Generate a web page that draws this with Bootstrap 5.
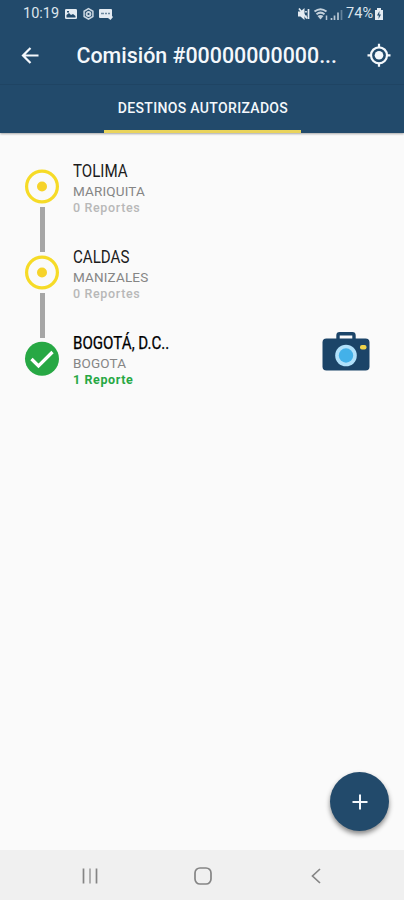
<!DOCTYPE html>
<html lang="es">
<head>
<meta charset="utf-8">
<meta name="viewport" content="width=device-width, initial-scale=1">
<title>Comisión</title>
<link href="https://cdn.jsdelivr.net/npm/bootstrap@5.3.0/dist/css/bootstrap.min.css" rel="stylesheet">
<style>
body{font-family:Roboto,"Noto Sans",sans-serif;background:#fafafa;height:900px;overflow:hidden;line-height:1}
svg{display:block;flex:none}
.top-area{background:#224a6b;height:133px;color:#f4f8fc;box-shadow:0 1px 2px #0005}
.status-line{height:27px;padding:1px 20px 0 23px;font-size:14.5px;color:#dce5ed}
.title-line{height:57px;padding:0 12px 0 20px}
.title-text{font-size:21.4px;font-weight:500;margin-left:34.5px;width:264px;line-height:30px;padding-top:1px;white-space:nowrap}
.tab-line{height:49px;border-top:1px solid #1f4463}
.tab-item{width:197px;height:48px;padding:1px 0 0 2px;border-bottom:3px solid #ead45c;font-size:14px;font-weight:500;letter-spacing:.33px}
.trip-list{padding:22px 34px 0 24px}
.trip-row{height:86px}
.rail{width:36px;padding-top:13px}
.rail-bar{width:5px;height:45px;background:#a6a6a6;margin-top:3px;flex:none}
.trip-text{margin-left:13px;padding-top:7px;white-space:nowrap}
.trip-name{font-size:18px;line-height:18px;color:#1c1c1c;transform:scaleX(.84);transform-origin:left}
.trip-name.done{color:#000;-webkit-text-stroke:.25px #000}
.trip-city{font-size:13.5px;line-height:16px;margin-top:3px;color:#858585;letter-spacing:.15px}
.trip-count{font-size:12.5px;line-height:16px;margin-top:1px;font-weight:500;color:#b8b8b8;letter-spacing:.65px}
.trip-count.done{color:#27a844;font-weight:700;letter-spacing:.6px}
.camera{margin-top:5px}
.fab{width:59px;height:59px;background:#224a6b;margin:0 15px 19px auto;box-shadow:0 3px 5px #0007}
.nav-keys{height:50px;background:#f0f0f0;padding:1px 82px 0 82px}
.key-home{margin-right:2px}
</style>
<script src="https://cdn.jsdelivr.net/npm/bootstrap@5.3.0/dist/js/bootstrap.bundle.min.js"></script>
</head>
<body class="d-flex flex-column">
<header class="top-area flex-shrink-0">
  <div class="status-line d-flex align-items-center">
    <span>10:19</span>
    <svg width="50" height="14" viewBox="0 0 50 14" style="margin-left:6px">
      <rect x="0" y="2" width="12" height="10" rx="1.3" fill="#e4ebf2"/><path d="M1.5 10.5V8l2.5-2 2 2 2-1 2.5 2v1.5zM2 4h2v1.5H2z" fill="#224a6b"/>
      <g fill="none" stroke="#cbd7e2"><path d="M23.500 1.700l4.400 2.600v5.200l-4.400 2.600-4.400-2.600V4.300z" stroke-width="1.500"/><circle cx="23.500" cy="7" r="2" stroke-width="1.800"/></g>
      <path d="M35 2h11a1 1 0 0 1 1 1v6l1 1-2.500 3L43 11h-8a1 1 0 0 1-1-1V3a1 1 0 0 1 1-1z" fill="#e4ebf2"/><path d="M36 6.500h3m1 0h2m1 0h2" stroke="#6d899f" stroke-width="1.500"/>
    </svg>
    <svg class="ms-auto" width="47" height="14" viewBox="0 0 47 14">
      <path d="M0 4.500h2.500L6.500 1v12L2.500 9.500H0z" fill="#e4ebf2"/><path d="M1 1.500l8 10M10.500 2v10M8 4v1.500M8 8.500V10" stroke="#e4ebf2" stroke-width="1.700"/>
      <g fill="none" stroke="#c4d1dc" stroke-width="2"><path d="M16.500 4.500q6-4.600 12 0M18.500 7.200q4-3.200 8 0"/></g><path d="M22.500 12.500l-3-3.500q3-2 6 0z" fill="#c4d1dc"/><path d="M28.500 8.500V13" stroke="#b7c7d4" stroke-width="1.500"/>
      <path d="M33.500 11v2M36.500 8.500V13M40 5.500V13" stroke="#b7c7d4" stroke-width="1.700"/><path d="M43.500 3v10" stroke="#64829b" stroke-width="1.700"/>
    </svg>
    <span style="margin-left:1px">74%</span>
    <svg width="10" height="14" viewBox="0 0 10 14" style="margin-left:1px"><path d="M3 1h4v2h2v10H1V3h2z" fill="#e4ebf2"/><path d="M5.500 4L3 8.500h1.800L4.500 12 7 7.500H5.200z" fill="#224a6b"/></svg>
  </div>
  <div class="title-line d-flex align-items-center">
    <svg width="22" height="22" viewBox="0 0 22 22" fill="none" stroke="#f4f8fc" stroke-width="2.200"><path d="M18.500 10.500H3.500M10.500 3L3 10.500l7.500 7.500"/></svg>
    <div class="title-text text-truncate">Comisión #00000000000...</div>
    <svg class="ms-auto" width="26" height="26" viewBox="0 0 26 26"><g transform="translate(0 -.7)"><circle cx="13" cy="13" r="8" fill="none" stroke="#f4f8fc" stroke-width="2.200"/><circle cx="13" cy="13" r="4.300" fill="#f4f8fc"/><path d="M13 1.500v4M13 20.500v4M1.500 13h4M20.500 13h4" stroke="#f4f8fc" stroke-width="2.200"/></g></svg>
  </div>
  <div class="tab-line d-flex justify-content-center">
    <div class="tab-item d-flex align-items-center justify-content-center">DESTINOS AUTORIZADOS</div>
  </div>
</header>
<main class="trip-list flex-grow-1">
  <div class="trip-row d-flex">
    <div class="rail d-flex flex-column align-items-center"><svg width="36" height="36" viewBox="0 0 36 36"><circle cx="18" cy="18.500" r="15.400" fill="none" stroke="#f6db27" stroke-width="3.200"/><circle cx="18" cy="18.500" r="5" fill="#f6d32a"/></svg><div class="rail-bar"></div></div>
    <div class="trip-text"><div class="trip-name">TOLIMA</div><div class="trip-city">MARIQUITA</div><div class="trip-count">0 Reportes</div></div>
  </div>
  <div class="trip-row d-flex">
    <div class="rail d-flex flex-column align-items-center"><svg width="36" height="36" viewBox="0 0 36 36"><circle cx="18" cy="18.500" r="15.400" fill="none" stroke="#f6db27" stroke-width="3.200"/><circle cx="18" cy="18.500" r="5" fill="#f6d32a"/></svg><div class="rail-bar"></div></div>
    <div class="trip-text"><div class="trip-name">CALDAS</div><div class="trip-city">MANIZALES</div><div class="trip-count">0 Reportes</div></div>
  </div>
  <div class="trip-row d-flex">
    <div class="rail d-flex flex-column align-items-center"><svg width="36" height="36" viewBox="0 0 36 36"><circle cx="18" cy="18.700" r="17" fill="#27a844"/><path d="M7.500 19l7 7L28.500 12" fill="none" stroke="#fff" stroke-width="3.300"/></svg></div>
    <div class="trip-text"><div class="trip-name done">BOGOTÁ, D.C..</div><div class="trip-city">BOGOTA</div><div class="trip-count done">1 Reporte</div></div>
    <svg class="camera ms-auto" width="48" height="40" viewBox="0 0 48 40"><path d="M16 8V3.500q0-1.700 1.700-1.700h12.600q1.700 0 1.700 1.700V8" fill="none" stroke="#1b4468" stroke-width="3.400"/><rect x=".5" y="6.500" width="47" height="32" rx="4" fill="#1b4468"/><circle cx="24" cy="23.500" r="10.800" fill="#b0e0fa"/><circle cx="24" cy="23.500" r="7.200" fill="#43b1e9"/><rect x="38" y="13" width="6.500" height="4.500" rx="2" fill="#edd34a"/></svg>
  </div>
</main>
<button class="fab btn rounded-circle border-0 p-0 d-flex align-items-center justify-content-center flex-shrink-0" aria-label="Agregar"><svg width="16" height="16" viewBox="0 0 16 16"><path d="M8 .5v15M.5 8h15" stroke="#f4f8fc" stroke-width="2"/></svg></button>
<footer class="nav-keys d-flex align-items-center justify-content-between flex-shrink-0">
  <svg width="16" height="18" viewBox="0 0 16 18"><path d="M1.500 1.500v15M14.500 1.500v15" stroke="#858585" stroke-width="1.700"/><path d="M8 1.500v15" stroke="#a5a5a5" stroke-width="1.700"/></svg>
  <svg class="key-home" width="20" height="20" viewBox="0 0 20 20"><rect x="2" y="2" width="16" height="16" rx="5" fill="none" stroke="#858585" stroke-width="1.700"/></svg>
  <svg width="12" height="18" viewBox="0 0 12 18"><path d="M10 2L2.500 9l7.500 7" fill="none" stroke="#858585" stroke-width="1.700"/></svg>
</footer>
</body>
</html>
